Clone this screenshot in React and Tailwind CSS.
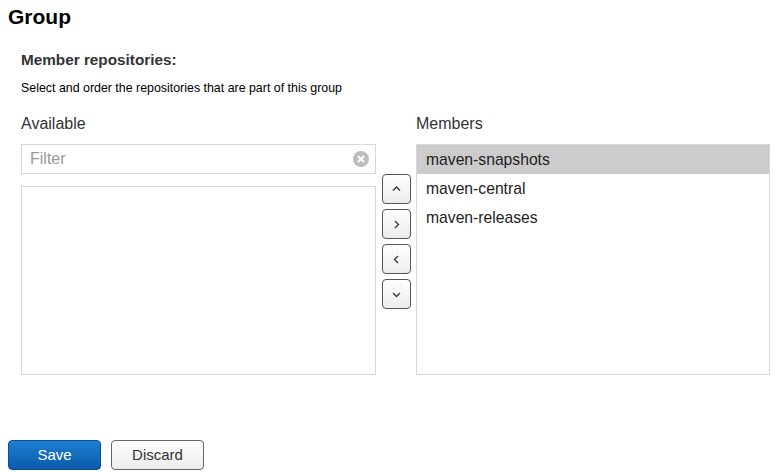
import React, { useState } from 'react';

const members = ['maven-snapshots', 'maven-central', 'maven-releases'];

// Small chevron for the order buttons
const Chevron = ({ dir }) => {
  const paths = {
    up: 'M2 6.5L5.5 3L9 6.5',
    right: 'M4 2L7.5 5.5L4 9',
    left: 'M7 2L3.5 5.5L7 9',
    down: 'M2 4L5.5 7.5L9 4',
  };
  return (
    <svg width="11" height="11" viewBox="0 0 11 11" fill="none" stroke="#333" strokeWidth="1.3">
      <path d={paths[dir]} />
    </svg>
  );
};

const OrderButton = ({ dir }) => (
  <button
    type="button"
    className="w-[29px] h-[30px] flex items-center justify-center border border-[#555] rounded-[4px] bg-gradient-to-b from-white to-[#ececec]"
  >
    <Chevron dir={dir} />
  </button>
);

export default function App() {
  const [selected, setSelected] = useState(0);
  const [filter, setFilter] = useState('');

  return (
    <div className="w-[783px] h-[472px] bg-white px-2 text-[#333]" style={{ fontFamily: '"Liberation Sans", Arial, sans-serif' }}>
      <h1 className="pt-[5px] text-[21px] leading-[24px] font-bold text-black">Group</h1>

      <div className="pl-[13px]">
        <h2 className="mt-[22px] text-[15.3px] leading-[18px] font-bold text-[#333]">Member repositories:</h2>
        <p className="mt-[12px] text-[12.4px] leading-[14px] text-black">
          Select and order the repositories that are part of this group
        </p>

        <div className="flex mt-[19px]">
          {/* Available */}
          <div className="w-[355px]">
            <div className="text-[16px] leading-[20px] text-[#333]">Available</div>
            <div className="mt-[10px] relative h-[30px] border border-[#d8d8d8]">
              <input
                value={filter}
                onChange={(e) => setFilter(e.target.value)}
                placeholder="Filter"
                className="w-full h-full pl-[8px] pr-[28px] text-[16px] text-[#333] placeholder:text-[#999] outline-none"
              />
              <span className="absolute right-[6px] top-[6px] w-[16px] h-[16px] rounded-full bg-[#bdbdbd] flex items-center justify-center">
                <svg width="8" height="8" viewBox="0 0 8 8" stroke="white" strokeWidth="2">
                  <path d="M1 1L7 7M7 1L1 7" />
                </svg>
              </span>
            </div>
            <div className="mt-[12px] h-[189px] border border-[#d8d8d8]"></div>
          </div>

          {/* Order buttons */}
          <div className="ml-[6px] mt-[60px] flex flex-col gap-[5px]">
            <OrderButton dir="up" />
            <OrderButton dir="right" />
            <OrderButton dir="left" />
            <OrderButton dir="down" />
          </div>

          {/* Members */}
          <div className="ml-[5px] w-[354px]">
            <div className="text-[16px] leading-[20px] text-[#333]">Members</div>
            <div className="mt-[10px] h-[231px] border border-[#d8d8d8]">
              {members.map((name, i) => (
                <div
                  key={name}
                  onClick={() => setSelected(i)}
                  className={`h-[29px] pl-[9px] flex items-center text-[15.7px] text-[#222] ${
                    selected === i ? 'bg-[#cccccc]' : ''
                  }`}
                >
                  {name}
                </div>
              ))}
            </div>
          </div>
        </div>
      </div>

      {/* Action Buttons */}
      <div className="flex gap-[10px] mt-[65px]">
        <button
          type="button"
          className="w-[93px] h-[30px] rounded-[4px] border border-[#0b4f91] bg-gradient-to-b from-[#1e7fd0] to-[#0a5aab] text-white text-[15px]"
        >
          Save
        </button>
        <button
          type="button"
          className="w-[93px] h-[30px] rounded-[4px] border border-[#666] bg-gradient-to-b from-white to-[#ececec] text-[#333] text-[15px]"
        >
          Discard
        </button>
      </div>
    </div>
  );
}
